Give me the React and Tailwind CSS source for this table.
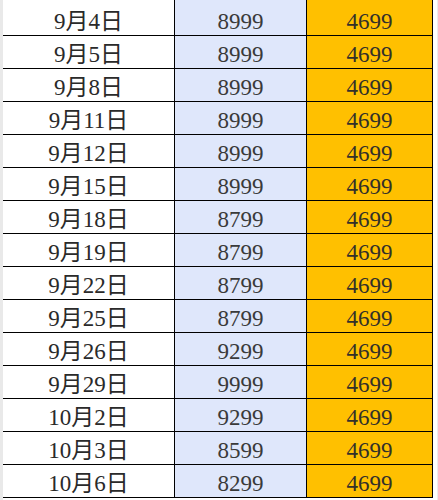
import React from 'react';

const rows = [
  ['9月4日', '8999', '4699'],
  ['9月5日', '8999', '4699'],
  ['9月8日', '8999', '4699'],
  ['9月11日', '8999', '4699'],
  ['9月12日', '8999', '4699'],
  ['9月15日', '8999', '4699'],
  ['9月18日', '8799', '4699'],
  ['9月19日', '8799', '4699'],
  ['9月22日', '8799', '4699'],
  ['9月25日', '8799', '4699'],
  ['9月26日', '9299', '4699'],
  ['9月29日', '9999', '4699'],
  ['10月2日', '9299', '4699'],
  ['10月3日', '8599', '4699'],
  ['10月6日', '8299', '4699'],
];

const font = { fontFamily: '"Liberation Serif", "Noto Sans CJK SC", serif' };

function Row({ date, price, sale, h = 'h-[33px]' }) {
  return (
    <div className={`flex ${h} border-b border-black`}>
      <div className="w-[172px] flex items-center justify-center pt-[5px] bg-white border-r border-black text-[#2a2a2a]">{date}</div>
      <div className="w-[132px] flex items-center justify-center pt-[5px] bg-[#dfe7fb] border-r border-black text-[#3a3a3a]">{price}</div>
      <div className="w-[126px] flex items-center justify-center pt-[5px] bg-[#ffc000] border-r border-black text-[#33302a]">{sale}</div>
    </div>
  );
}

export default function App() {
  return (
    <div className="w-[438px] h-[500px] bg-white flex overflow-hidden text-[23px] leading-none" style={font}>
      {/* sheet gutter */}
      <div className="w-[3px] bg-[#e9e9e9] shrink-0" />
      <div className="flex flex-col">
        <Row date="" price="" sale="" h="h-[3px]" />
        {rows.map(([d, p, s]) => (
          <Row key={d} date={d} price={p} sale={s} />
        ))}
      </div>
      <div className="flex-1 flex justify-end">
        <div className="w-px bg-[#ececec]" />
      </div>
    </div>
  );
}
